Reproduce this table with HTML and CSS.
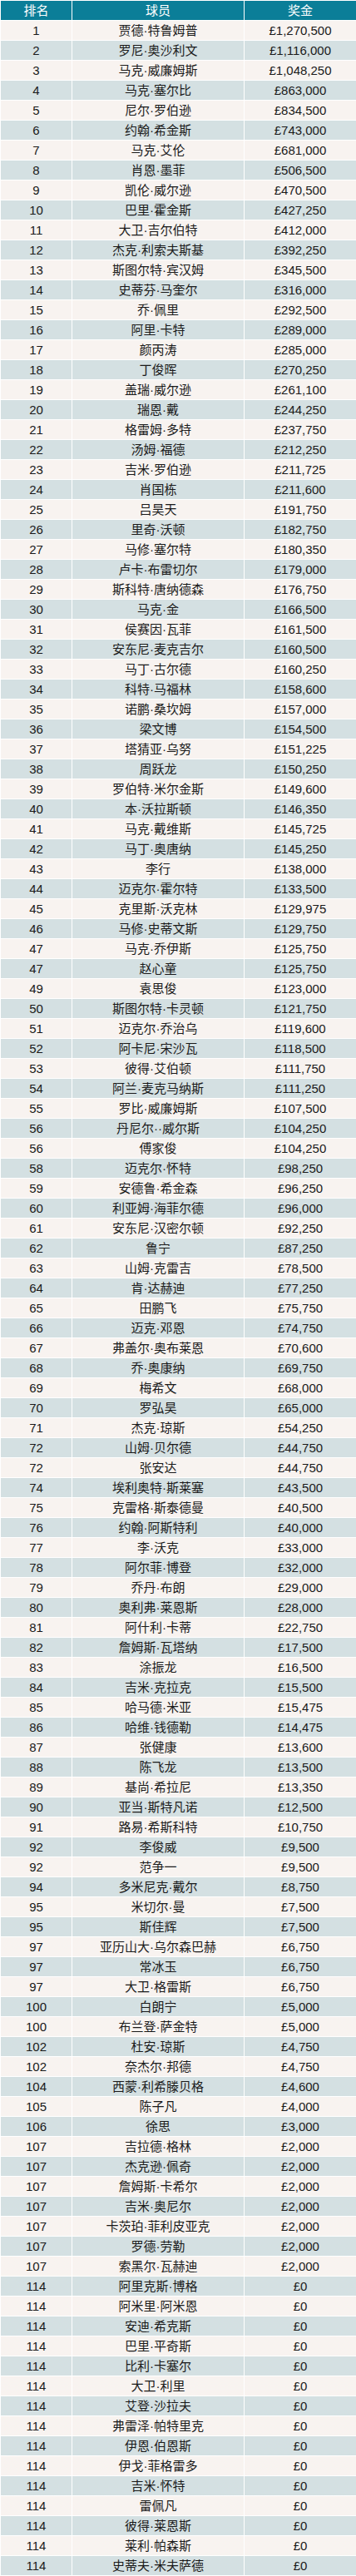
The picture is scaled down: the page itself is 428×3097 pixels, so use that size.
FILE: index.html
```html
<!DOCTYPE html>
<html lang="zh-CN">
<head>
<meta charset="utf-8">
<title>奖金排名</title>
<link rel="stylesheet" href="styles.css">
</head>
<body>
<table class="rank-table">
<colgroup><col class="c-rank"><col class="c-name"><col class="c-prize"></colgroup>
<thead>
<tr><th>排名</th><th>球员</th><th>奖金</th></tr>
</thead>
<tbody>
<tr><td>1</td><td>贾德·特鲁姆普</td><td>£1,270,500</td></tr>
<tr><td>2</td><td>罗尼·奥沙利文</td><td>£1,116,000</td></tr>
<tr><td>3</td><td>马克·威廉姆斯</td><td>£1,048,250</td></tr>
<tr><td>4</td><td>马克·塞尔比</td><td>£863,000</td></tr>
<tr><td>5</td><td>尼尔·罗伯逊</td><td>£834,500</td></tr>
<tr><td>6</td><td>约翰·希金斯</td><td>£743,000</td></tr>
<tr><td>7</td><td>马克·艾伦</td><td>£681,000</td></tr>
<tr><td>8</td><td>肖恩·墨菲</td><td>£506,500</td></tr>
<tr><td>9</td><td>凯伦·威尔逊</td><td>£470,500</td></tr>
<tr><td>10</td><td>巴里·霍金斯</td><td>£427,250</td></tr>
<tr><td>11</td><td>大卫·吉尔伯特</td><td>£412,000</td></tr>
<tr><td>12</td><td>杰克·利索夫斯基</td><td>£392,250</td></tr>
<tr><td>13</td><td>斯图尔特·宾汉姆</td><td>£345,500</td></tr>
<tr><td>14</td><td>史蒂芬·马奎尔</td><td>£316,000</td></tr>
<tr><td>15</td><td>乔·佩里</td><td>£292,500</td></tr>
<tr><td>16</td><td>阿里·卡特</td><td>£289,000</td></tr>
<tr><td>17</td><td>颜丙涛</td><td>£285,000</td></tr>
<tr><td>18</td><td>丁俊晖</td><td>£270,250</td></tr>
<tr><td>19</td><td>盖瑞·威尔逊</td><td>£261,100</td></tr>
<tr><td>20</td><td>瑞恩·戴</td><td>£244,250</td></tr>
<tr><td>21</td><td>格雷姆·多特</td><td>£237,750</td></tr>
<tr><td>22</td><td>汤姆·福德</td><td>£212,250</td></tr>
<tr><td>23</td><td>吉米·罗伯逊</td><td>£211,725</td></tr>
<tr><td>24</td><td>肖国栋</td><td>£211,600</td></tr>
<tr><td>25</td><td>吕昊天</td><td>£191,750</td></tr>
<tr><td>26</td><td>里奇·沃顿</td><td>£182,750</td></tr>
<tr><td>27</td><td>马修·塞尔特</td><td>£180,350</td></tr>
<tr><td>28</td><td>卢卡·布雷切尔</td><td>£179,000</td></tr>
<tr><td>29</td><td>斯科特·唐纳德森</td><td>£176,750</td></tr>
<tr><td>30</td><td>马克·金</td><td>£166,500</td></tr>
<tr><td>31</td><td>侯赛因·瓦菲</td><td>£161,500</td></tr>
<tr><td>32</td><td>安东尼·麦克吉尔</td><td>£160,500</td></tr>
<tr><td>33</td><td>马丁·古尔德</td><td>£160,250</td></tr>
<tr><td>34</td><td>科特·马福林</td><td>£158,600</td></tr>
<tr><td>35</td><td>诺鹏·桑坎姆</td><td>£157,000</td></tr>
<tr><td>36</td><td>梁文博</td><td>£154,500</td></tr>
<tr><td>37</td><td>塔猜亚·乌努</td><td>£151,225</td></tr>
<tr><td>38</td><td>周跃龙</td><td>£150,250</td></tr>
<tr><td>39</td><td>罗伯特·米尔金斯</td><td>£149,600</td></tr>
<tr><td>40</td><td>本·沃拉斯顿</td><td>£146,350</td></tr>
<tr><td>41</td><td>马克·戴维斯</td><td>£145,725</td></tr>
<tr><td>42</td><td>马丁·奥唐纳</td><td>£145,250</td></tr>
<tr><td>43</td><td>李行</td><td>£138,000</td></tr>
<tr><td>44</td><td>迈克尔·霍尔特</td><td>£133,500</td></tr>
<tr><td>45</td><td>克里斯·沃克林</td><td>£129,975</td></tr>
<tr><td>46</td><td>马修·史蒂文斯</td><td>£129,750</td></tr>
<tr><td>47</td><td>马克·乔伊斯</td><td>£125,750</td></tr>
<tr><td>47</td><td>赵心童</td><td>£125,750</td></tr>
<tr><td>49</td><td>袁思俊</td><td>£123,000</td></tr>
<tr><td>50</td><td>斯图尔特·卡灵顿</td><td>£121,750</td></tr>
<tr><td>51</td><td>迈克尔·乔治乌</td><td>£119,600</td></tr>
<tr><td>52</td><td>阿卡尼·宋沙瓦</td><td>£118,500</td></tr>
<tr><td>53</td><td>彼得·艾伯顿</td><td>£111,750</td></tr>
<tr><td>54</td><td>阿兰·麦克马纳斯</td><td>£111,250</td></tr>
<tr><td>55</td><td>罗比·威廉姆斯</td><td>£107,500</td></tr>
<tr><td>56</td><td>丹尼尔··威尔斯</td><td>£104,250</td></tr>
<tr><td>56</td><td>傅家俊</td><td>£104,250</td></tr>
<tr><td>58</td><td>迈克尔·怀特</td><td>£98,250</td></tr>
<tr><td>59</td><td>安德鲁·希金森</td><td>£96,250</td></tr>
<tr><td>60</td><td>利亚姆·海菲尔德</td><td>£96,000</td></tr>
<tr><td>61</td><td>安东尼·汉密尔顿</td><td>£92,250</td></tr>
<tr><td>62</td><td>鲁宁</td><td>£87,250</td></tr>
<tr><td>63</td><td>山姆·克雷吉</td><td>£78,500</td></tr>
<tr><td>64</td><td>肯·达赫迪</td><td>£77,250</td></tr>
<tr><td>65</td><td>田鹏飞</td><td>£75,750</td></tr>
<tr><td>66</td><td>迈克·邓恩</td><td>£74,750</td></tr>
<tr><td>67</td><td>弗盖尔·奥布莱恩</td><td>£70,600</td></tr>
<tr><td>68</td><td>乔·奥康纳</td><td>£69,750</td></tr>
<tr><td>69</td><td>梅希文</td><td>£68,000</td></tr>
<tr><td>70</td><td>罗弘昊</td><td>£65,000</td></tr>
<tr><td>71</td><td>杰克·琼斯</td><td>£54,250</td></tr>
<tr><td>72</td><td>山姆·贝尔德</td><td>£44,750</td></tr>
<tr><td>72</td><td>张安达</td><td>£44,750</td></tr>
<tr><td>74</td><td>埃利奥特·斯莱塞</td><td>£43,500</td></tr>
<tr><td>75</td><td>克雷格·斯泰德曼</td><td>£40,500</td></tr>
<tr><td>76</td><td>约翰·阿斯特利</td><td>£40,000</td></tr>
<tr><td>77</td><td>李·沃克</td><td>£33,000</td></tr>
<tr><td>78</td><td>阿尔菲·博登</td><td>£32,000</td></tr>
<tr><td>79</td><td>乔丹·布朗</td><td>£29,000</td></tr>
<tr><td>80</td><td>奥利弗·莱恩斯</td><td>£28,000</td></tr>
<tr><td>81</td><td>阿什利·卡蒂</td><td>£22,750</td></tr>
<tr><td>82</td><td>詹姆斯·瓦塔纳</td><td>£17,500</td></tr>
<tr><td>83</td><td>涂振龙</td><td>£16,500</td></tr>
<tr><td>84</td><td>吉米·克拉克</td><td>£15,500</td></tr>
<tr><td>85</td><td>哈马德·米亚</td><td>£15,475</td></tr>
<tr><td>86</td><td>哈维·钱德勒</td><td>£14,475</td></tr>
<tr><td>87</td><td>张健康</td><td>£13,600</td></tr>
<tr><td>88</td><td>陈飞龙</td><td>£13,500</td></tr>
<tr><td>89</td><td>基尚·希拉尼</td><td>£13,350</td></tr>
<tr><td>90</td><td>亚当·斯特凡诺</td><td>£12,500</td></tr>
<tr><td>91</td><td>路易·希斯科特</td><td>£10,750</td></tr>
<tr><td>92</td><td>李俊威</td><td>£9,500</td></tr>
<tr><td>92</td><td>范争一</td><td>£9,500</td></tr>
<tr><td>94</td><td>多米尼克·戴尔</td><td>£8,750</td></tr>
<tr><td>95</td><td>米切尔·曼</td><td>£7,500</td></tr>
<tr><td>95</td><td>斯佳辉</td><td>£7,500</td></tr>
<tr><td>97</td><td>亚历山大·乌尔森巴赫</td><td>£6,750</td></tr>
<tr><td>97</td><td>常冰玉</td><td>£6,750</td></tr>
<tr><td>97</td><td>大卫·格雷斯</td><td>£6,750</td></tr>
<tr><td>100</td><td>白朗宁</td><td>£5,000</td></tr>
<tr><td>100</td><td>布兰登·萨金特</td><td>£5,000</td></tr>
<tr><td>102</td><td>杜安·琼斯</td><td>£4,750</td></tr>
<tr><td>102</td><td>奈杰尔·邦德</td><td>£4,750</td></tr>
<tr><td>104</td><td>西蒙·利希滕贝格</td><td>£4,600</td></tr>
<tr><td>105</td><td>陈子凡</td><td>£4,000</td></tr>
<tr><td>106</td><td>徐思</td><td>£3,000</td></tr>
<tr><td>107</td><td>吉拉德·格林</td><td>£2,000</td></tr>
<tr><td>107</td><td>杰克逊·佩奇</td><td>£2,000</td></tr>
<tr><td>107</td><td>詹姆斯·卡希尔</td><td>£2,000</td></tr>
<tr><td>107</td><td>吉米·奥尼尔</td><td>£2,000</td></tr>
<tr><td>107</td><td>卡茨珀·菲利皮亚克</td><td>£2,000</td></tr>
<tr><td>107</td><td>罗德·劳勒</td><td>£2,000</td></tr>
<tr><td>107</td><td>索黑尔·瓦赫迪</td><td>£2,000</td></tr>
<tr><td>114</td><td>阿里克斯·博格</td><td>£0</td></tr>
<tr><td>114</td><td>阿米里·阿米恩</td><td>£0</td></tr>
<tr><td>114</td><td>安迪·希克斯</td><td>£0</td></tr>
<tr><td>114</td><td>巴里·平奇斯</td><td>£0</td></tr>
<tr><td>114</td><td>比利·卡塞尔</td><td>£0</td></tr>
<tr><td>114</td><td>大卫·利里</td><td>£0</td></tr>
<tr><td>114</td><td>艾登·沙拉夫</td><td>£0</td></tr>
<tr><td>114</td><td>弗雷泽·帕特里克</td><td>£0</td></tr>
<tr><td>114</td><td>伊恩·伯恩斯</td><td>£0</td></tr>
<tr><td>114</td><td>伊戈·菲格雷多</td><td>£0</td></tr>
<tr><td>114</td><td>吉米·怀特</td><td>£0</td></tr>
<tr><td>114</td><td>雷佩凡</td><td>£0</td></tr>
<tr><td>114</td><td>彼得·莱恩斯</td><td>£0</td></tr>
<tr><td>114</td><td>莱利·帕森斯</td><td>£0</td></tr>
<tr><td>114</td><td>史蒂夫·米夫萨德</td><td>£0</td></tr>
</tbody>
</table>
</body>
</html>
```
FILE: styles.css
```css
html, body {
  margin: 0;
  padding: 0;
  background: #ffffff;
}

.rank-table {
  width: 428px;
  table-layout: fixed;
  border-collapse: collapse;
  font-family: "Liberation Sans", "Noto Sans CJK SC", sans-serif;
  font-size: 15px;
  color: #1a1a1a;
}

.c-rank { width: 86px; }
.c-name { width: 207px; }
.c-prize { width: 135px; }

.rank-table th,
.rank-table td {
  height: 23px;
  padding: 0;
  border: 1px solid #ffffff;
  text-align: center;
  vertical-align: middle;
  line-height: 23px;
  white-space: nowrap;
  overflow: hidden;
}

.rank-table th {
  background: #0b7e98;
  color: #ffffff;
  font-weight: normal;
  font-size: 15px;
}

.rank-table tbody tr:nth-child(odd) td {
  background: #f8f3f0;
}

.rank-table tbody tr:nth-child(even) td {
  background: #d4e0e2;
}
```
